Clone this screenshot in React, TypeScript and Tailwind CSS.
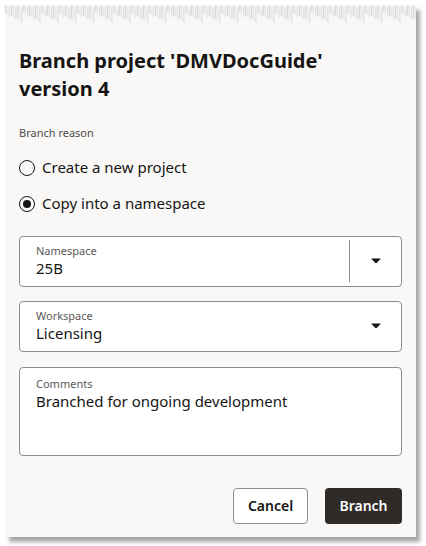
import { useState } from "react"

const font = { fontFamily: '"Noto Sans", "Open Sans", sans-serif' }

function TornEdge() {
    // серая "рваная" полоска сверху
    const cols = Array.from({ length: 206 }, (_, i) => i)
    return (
        <svg width="411" height="18" className="block">
            <rect width="411" height="18" fill="#f9f8f6" />
            {cols.map(i => {
                const h = 8 + ((i * 37) % 9)
                const y = (i * 7) % 3
                return <rect key={i} x={i * 2} y={y} width="1.5" height={h} fill={i % 3 == 0 ? "#dddcda" : i % 3 == 1 ? "#ebeae8" : "#e4e3e1"} />
            })}
        </svg>
    )
}

function Caret() {
    return (
        <svg width="12" height="8" viewBox="0 0 12 8">
            <path d="M1 1.5 L11 1.5 L6 6.5 Z" fill="#161513" />
        </svg>
    )
}

function Radio(props: { checked: boolean, label: string, onClick: () => void }) {
    return (
        <div className="flex items-center gap-[7px] h-[36px] cursor-pointer" onClick={props.onClick}>
            <span className="w-[16px] h-[16px] rounded-full border-[1.5px] border-[#161513] flex items-center justify-center">
                {props.checked && <span className="w-[8px] h-[8px] rounded-full bg-[#161513]" />}
            </span>
            <span className="text-[15px] text-[#161513]">{props.label}</span>
        </div>
    )
}

export default function App() {
    const [reason, setReason] = useState("copy")

    return (
        <div className="w-[426px] h-[546px] bg-white pt-[5px] pl-[5px]" style={font}>
            <div className="w-[411px] h-[532px] bg-[#f9f8f6] shadow-[4px_5px_4px_rgba(0,0,0,0.35)] flex flex-col">
                <TornEdge />

                <div className="px-[14px] flex flex-col flex-1">
                    <h1 className="mt-[24px] max-w-[330px] text-[20px] leading-[28px] font-bold text-[#161513]">
                        Branch project 'DMVDocGuide' version 4
                    </h1>

                    <div className="mt-[22px] text-[11px] text-[#4d4b48]">Branch reason</div>

                    <div className="mt-[8px]">
                        <Radio checked={reason == "new"} label="Create a new project" onClick={() => setReason("new")} />
                        <Radio checked={reason == "copy"} label="Copy into a namespace" onClick={() => setReason("copy")} />
                    </div>

                    <div className="mt-[14px] h-[51px] rounded-[4px] border border-[#8f8d8a] bg-white flex items-center">
                        <div className="flex-1 pl-[16px]">
                            <div className="text-[11px] text-[#5b5855] leading-[14px]">Namespace</div>
                            <div className="text-[15px] text-[#161513] leading-[20px]">25B</div>
                        </div>
                        <div className="w-px h-[42px] bg-[#8f8d8a]" />
                        <div className="w-[51px] flex justify-center"><Caret /></div>
                    </div>

                    <div className="mt-[14px] h-[51px] rounded-[4px] border border-[#8f8d8a] bg-white flex items-center">
                        <div className="flex-1 pl-[16px]">
                            <div className="text-[11px] text-[#5b5855] leading-[14px]">Workspace</div>
                            <div className="text-[15px] text-[#161513] leading-[20px]">Licensing</div>
                        </div>
                        <div className="w-[51px] flex justify-center"><Caret /></div>
                    </div>

                    <div className="mt-[15px] h-[89px] rounded-[4px] border border-[#8f8d8a] bg-white pl-[16px] pt-[9px]">
                        <div className="text-[11px] text-[#5b5855] leading-[14px]">Comments</div>
                        <div className="text-[15px] text-[#161513] leading-[20px]">Branched for ongoing development</div>
                    </div>

                    <div className="mt-[32px] flex justify-end gap-[17px]">
                        <button className="w-[75px] h-[36px] rounded-[4px] border border-[#8f8d8a] bg-white text-[14px] text-[#161513] font-semibold">Cancel</button>
                        <button className="w-[77px] h-[36px] rounded-[4px] bg-[#2f2b28] text-[14px] text-white font-semibold">Branch</button>
                    </div>
                </div>
            </div>
        </div>
    )
}
